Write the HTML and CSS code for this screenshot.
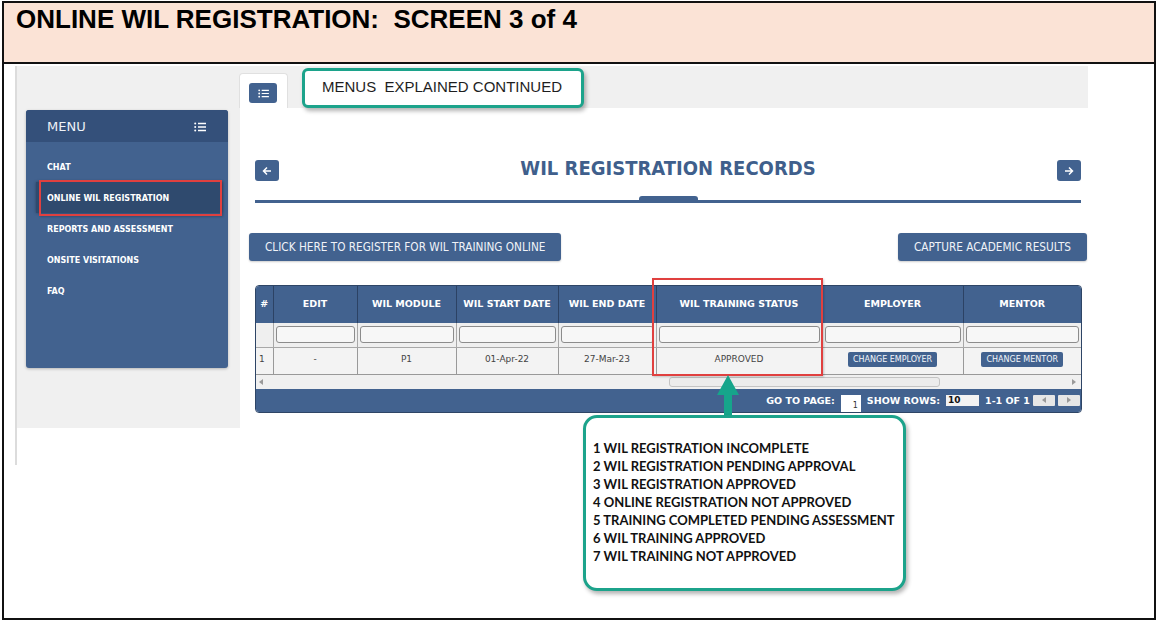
FILE: index.html
```html
<!DOCTYPE html>
<html lang="en">
<head>
  <meta charset="UTF-8">
  <title>Online WIL Registration - Screen 3 of 4</title>
  <link rel="stylesheet" href="styles.css">
</head>
<body>

  <div class="sheet">

    <!-- Page heading -->
    <header class="banner">
      <h1>ONLINE WIL REGISTRATION:&nbsp; SCREEN 3 of 4</h1>
    </header>

    <!-- Portal screen -->
    <div class="shot">
      <div class="app">

        <aside class="side">
          <nav class="menu">
            <div class="menu-head">
              <span>MENU</span>
              <svg width="12" height="10" viewBox="0 0 12 10">
                <g fill="#fff"><circle cx="1.2" cy="1.5" r="1"/><circle cx="1.2" cy="5" r="1"/><circle cx="1.2" cy="8.5" r="1"/></g>
                <g stroke="#fff" stroke-width="1.3"><path d="M4 1.5H12M4 5H12M4 8.5H12"/></g>
              </svg>
            </div>
            <ul>
              <li>CHAT</li>
              <li class="active">ONLINE WIL REGISTRATION</li>
              <li>REPORTS AND ASSESSMENT</li>
              <li>ONSITE VISITATIONS</li>
              <li>FAQ</li>
            </ul>
          </nav>
        </aside>

        <main class="main">
          <div class="tabs">
            <div class="tab">
              <button class="icon-btn">
                <svg width="11" height="9" viewBox="0 0 12 10">
                  <g fill="#fff"><circle cx="1.2" cy="1.5" r="1"/><circle cx="1.2" cy="5" r="1"/><circle cx="1.2" cy="8.5" r="1"/></g>
                  <g stroke="#fff" stroke-width="1.3"><path d="M4 1.5H12M4 5H12M4 8.5H12"/></g>
                </svg>
              </button>
            </div>
          </div>

          <section class="panel">
            <div class="title-row">
              <button class="nav-btn">
                <svg width="10" height="10" viewBox="0 0 10 10"><path d="M9 5H1.5M5 1.5L1.5 5L5 8.5" fill="none" stroke="#fff" stroke-width="1.5"/></svg>
              </button>
              <h2>WIL REGISTRATION RECORDS</h2>
              <button class="nav-btn">
                <svg width="10" height="10" viewBox="0 0 10 10"><path d="M1 5H8.5M5 1.5L8.5 5L5 8.5" fill="none" stroke="#fff" stroke-width="1.5"/></svg>
              </button>
            </div>
            <div class="rule"><span class="bump"></span></div>

            <div class="actions">
              <button class="btn">CLICK HERE TO REGISTER FOR WIL TRAINING ONLINE</button>
              <button class="btn">CAPTURE ACADEMIC RESULTS</button>
            </div>

            <div class="grid">
              <table>
                <colgroup>
                  <col style="width:17px"><col style="width:84px"><col style="width:99px"><col style="width:102px">
                  <col style="width:98px"><col style="width:166px"><col style="width:141px"><col style="width:118px">
                </colgroup>
                <thead>
                  <tr>
                    <th>#</th>
                    <th>EDIT</th>
                    <th>WIL MODULE</th>
                    <th>WIL START DATE</th>
                    <th>WIL END DATE</th>
                    <th>WIL TRAINING STATUS</th>
                    <th>EMPLOYER</th>
                    <th>MENTOR</th>
                  </tr>
                </thead>
                <tbody>
                  <tr class="filters">
                    <td></td>
                    <td><input type="text"></td>
                    <td><input type="text"></td>
                    <td><input type="text"></td>
                    <td><input type="text"></td>
                    <td><input type="text"></td>
                    <td><input type="text"></td>
                    <td><input type="text"></td>
                  </tr>
                  <tr class="rec">
                    <td class="num">1</td>
                    <td>-</td>
                    <td>P1</td>
                    <td>01-Apr-22</td>
                    <td>27-Mar-23</td>
                    <td>APPROVED</td>
                    <td><span class="mini">CHANGE EMPLOYER</span></td>
                    <td><span class="mini">CHANGE MENTOR</span></td>
                  </tr>
                </tbody>
              </table>

              <div class="scroll">
                <svg width="4" height="6" viewBox="0 0 4 6"><path d="M4 0V6L0 3Z" fill="#9a9a9a"/></svg>
                <span class="thumb"></span>
                <svg width="4" height="6" viewBox="0 0 4 6"><path d="M0 0V6L4 3Z" fill="#9a9a9a"/></svg>
              </div>

              <div class="pager">
                <span>GO TO PAGE:</span>
                <span class="page-box">1</span>
                <span>SHOW ROWS:</span>
                <span class="rows-box">10</span>
                <span>1-1 OF 1</span>
                <span class="pg-btn"><svg width="4" height="6" viewBox="0 0 4 6"><path d="M4 0V6L0 3Z" fill="#999"/></svg></span>
                <span class="pg-btn"><svg width="4" height="6" viewBox="0 0 4 6"><path d="M0 0V6L4 3Z" fill="#999"/></svg></span>
              </div>
            </div>
          </section>
        </main>

      </div>
    </div>

    <!-- Annotations -->
    <div class="note note-top">MENUS&nbsp; EXPLAINED CONTINUED</div>
    <div class="mark mark-menu"></div>
    <div class="mark mark-status"></div>
    <svg class="pointer" width="24" height="46" viewBox="0 0 24 46">
      <path d="M12 1L23 21H16V46H8V21H1Z" fill="#16a58b"/>
    </svg>
    <div class="note note-status">
      <p>1 WIL REGISTRATION INCOMPLETE</p>
      <p>2 WIL REGISTRATION PENDING APPROVAL</p>
      <p>3 WIL REGISTRATION APPROVED</p>
      <p>4 ONLINE REGISTRATION NOT APPROVED</p>
      <p>5 TRAINING COMPLETED PENDING ASSESSMENT</p>
      <p>6 WIL TRAINING APPROVED</p>
      <p>7 WIL TRAINING NOT APPROVED</p>
    </div>

  </div>

</body>
</html>
```

FILE: styles.css
```css
* {
  box-sizing: border-box;
}

body {
  margin: 0;
  padding: 1px 0 0 2px;
  background: #fff;
  font-family: "DejaVu Sans", Verdana, sans-serif;
  color: #222;
}

.sheet {
  position: relative;
  width: 1154px;
  height: 619px;
  border: 2px solid #111;
}

.banner {
  height: 61px;
  background: #fbe3d6;
  border-bottom: 2px solid #111;
  padding: 2px 0 0 12px;
}

.banner h1 {
  margin: 0;
  font: bold 26px/28px "Liberation Sans", Arial, sans-serif;
  color: #000;
}

/* screen capture area */
.shot {
  margin: 2px 0 0 11px;
  width: 1073px;
  height: 399px;
  border-left: 2px solid #dcdcdc;
}

.app {
  display: grid;
  grid-template-columns: 223px 1fr;
  height: 362px;
  background: #f0f0f0;
}

.side {
  padding: 44px 0 0 9px;
}

.menu {
  width: 202px;
  height: 258px;
  background: #42628f;
  border-radius: 3px;
  box-shadow: 0 1px 3px rgba(0,0,0,0.25);
  overflow: hidden;
}

.menu-head {
  height: 32px;
  background: #34507a;
  display: flex;
  align-items: center;
  justify-content: space-between;
  padding: 1px 22px 0 21px;
  color: #eef2f7;
  font-size: 13px;
}

.menu ul {
  list-style: none;
  margin: 0;
  padding: 9px 6px 0 10px;
}

.menu li {
  height: 31px;
  padding: 3px 0 0 11px;
  line-height: 28px;
  font-size: 8px;
  font-weight: bold;
  color: #fff;
}

.menu li.active {
  background: #2f4a6e;
  box-shadow: 0 0 3px rgba(0,0,0,0.35);
}

.main {
  display: flex;
  flex-direction: column;
}

.tabs {
  height: 42px;
  padding-top: 7px;
}

.tab {
  width: 49px;
  height: 35px;
  margin-left: -1px;
  background: #fff;
  border: 1px solid #e0e0e0;
  border-bottom: none;
  border-radius: 4px 4px 0 0;
  padding: 9px 0 0 9px;
}

.icon-btn,
.nav-btn {
  display: flex;
  align-items: center;
  justify-content: center;
  padding: 0;
  border: none;
  background: #42628f;
  border-radius: 3px;
}

.icon-btn {
  width: 28px;
  height: 20px;
}

.panel {
  flex: 1;
  background: #fff;
  padding: 52px 7px 0 15px;
}

.title-row {
  display: flex;
  align-items: center;
  height: 21px;
}

.nav-btn {
  width: 24px;
  height: 21px;
}

.title-row h2 {
  flex: 1;
  margin: -4px 0 0;
  text-align: center;
  font: bold 20px/21px "DejaVu Sans Condensed", "DejaVu Sans", sans-serif;
  font-stretch: condensed;
  color: #3f5f8c;
}

.rule {
  display: flex;
  justify-content: center;
  margin-top: 15px;
  border-bottom: 3px solid #42628f;
}

.bump {
  width: 59px;
  height: 4px;
  background: #42628f;
  border-radius: 3px 3px 0 0;
}

.actions {
  display: flex;
  justify-content: space-between;
  margin: 30px -6px 0;
}

.btn {
  height: 28px;
  padding: 0 16px;
  border: none;
  border-radius: 3px;
  background: #42628f;
  color: #f0f3f8;
  font: 11.7px "DejaVu Sans Condensed", "DejaVu Sans", sans-serif;
  font-stretch: condensed;
  box-shadow: 0 1px 2px rgba(0,0,0,0.2);
}

/* records table */
.grid {
  margin: 24px -1px 0 0;
  border: 1px solid #2e4566;
  border-radius: 4px;
  overflow: hidden;
}

.grid table {
  width: 100%;
  border-collapse: collapse;
  table-layout: fixed;
}

.grid th {
  height: 37px;
  padding: 0 0 2px;
  background: #42628f;
  color: #fff;
  font-size: 9.5px;
  font-weight: bold;
  border-right: 1px solid #2c4264;
}

.grid th:last-child {
  border-right: none;
}

.filters td {
  height: 24px;
  padding: 0 2px;
  background: #efefef;
  border: 1px solid #a8a8a8;
  border-top: none;
}

.filters input {
  display: block;
  width: 100%;
  height: 17px;
  border: 1px solid #8c8c8c;
  border-radius: 3px;
  background: #f7f7f7;
}

.rec td {
  height: 27px;
  padding: 0 0 3px;
  background: #f3f3f3;
  border: 1px solid #999;
  text-align: center;
  font-size: 9px;
  color: #444;
}

.filters td:first-child,
.rec td:first-child {
  border-left: none;
}

.filters td:last-child,
.rec td:last-child {
  border-right: none;
}

.rec td.num {
  text-align: left;
  padding-left: 3px;
}

.mini {
  display: inline-block;
  padding: 3px 5px;
  background: #42628f;
  border-radius: 2px;
  color: #f4f6fa;
  font-size: 8px;
}

.scroll {
  display: flex;
  align-items: center;
  height: 14px;
  padding: 0 5px 0 3px;
  background: #f0f0f0;
}

.thumb {
  width: 271px;
  height: 10px;
  margin: 0 auto 0 406px;
  background: #ececec;
  border: 1px solid #c4c4c4;
  border-radius: 3px;
}

.pager {
  display: flex;
  justify-content: flex-end;
  align-items: center;
  gap: 6px;
  height: 23px;
  padding-right: 1px;
  background: #42628f;
  color: #fff;
  font-size: 9.5px;
  font-weight: bold;
}

.page-box {
  align-self: flex-end;
  width: 20px;
  height: 17px;
  padding: 6px 3px 0 0;
  background: #fff;
  color: #333;
  font-size: 8px;
  font-weight: normal;
  text-align: right;
}

.rows-box {
  width: 33px;
  height: 11px;
  line-height: 11px;
  padding-left: 2px;
  background: #f2f2f2;
  color: #111;
  font-size: 9px;
}

.pg-btn {
  display: flex;
  align-items: center;
  justify-content: center;
  width: 22px;
  height: 11px;
  margin-left: -3px;
  background: #e6e6e6;
  border-radius: 1px;
}

/* annotation callouts */
.note {
  position: absolute;
  background: #fff;
  border: 3px solid #1ca38b;
  box-shadow: 2px 3px 4px rgba(0,0,0,0.3);
}

.note-top {
  left: 298px;
  top: 65px;
  width: 282px;
  height: 40px;
  display: flex;
  align-items: center;
  padding: 0 0 4px 17px;
  border-radius: 6px;
  font: 15px "Liberation Sans", Arial, sans-serif;
  color: #1e1e1e;
}

.note-status {
  left: 579px;
  top: 412px;
  width: 323px;
  height: 176px;
  padding: 21px 0 0 7px;
  border-radius: 14px;
  font: bold 13px/18px Lato, "Liberation Sans", sans-serif;
  color: #111;
}

.note-status p {
  margin: 0;
}

.mark {
  position: absolute;
  border: 2px solid #e0403f;
  box-shadow: 1px 1px 2px rgba(0,0,0,0.2);
}

.mark-menu {
  left: 35px;
  top: 177px;
  width: 183px;
  height: 36px;
}

.mark-status {
  left: 648px;
  top: 275px;
  width: 171px;
  height: 98px;
}

.pointer {
  position: absolute;
  left: 712px;
  top: 371px;
}
```
